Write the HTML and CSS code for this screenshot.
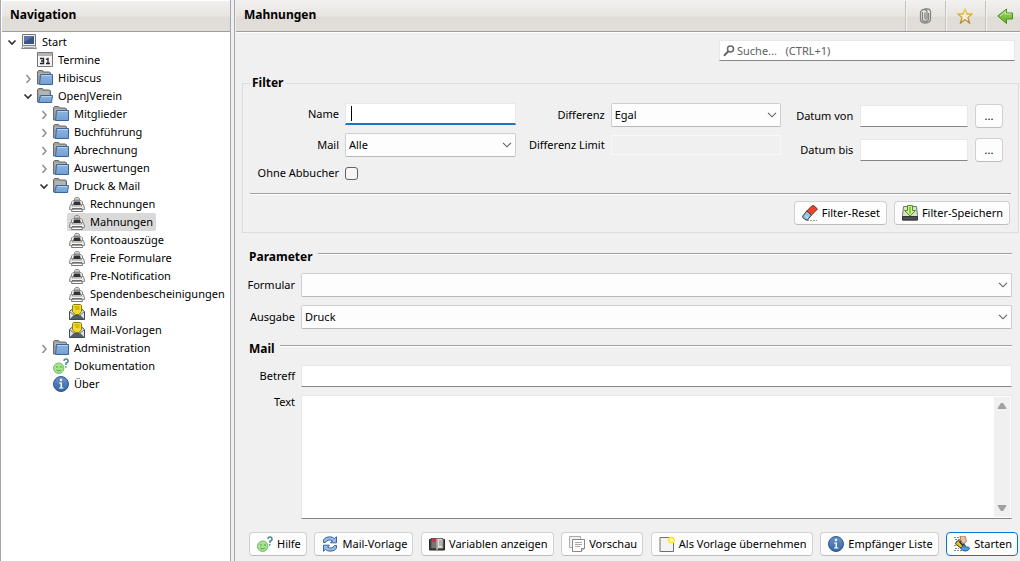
FILE: index.html
```html
<!DOCTYPE html>
<html lang="de">
<head>
<meta charset="utf-8">
<title>Mahnungen</title>
<link rel="stylesheet" href="styles.css">
</head>
<body>
<svg class="sprite" aria-hidden="true">
  <defs>
    <linearGradient id="g-folder" x1="0" y1="0" x2="0" y2="1"><stop offset="0" stop-color="#8fb4dd"/><stop offset="1" stop-color="#729fcf"/></linearGradient>
    <linearGradient id="g-info" x1="0" y1="0" x2="0" y2="1"><stop offset="0" stop-color="#6b93c8"/><stop offset="1" stop-color="#3465a4"/></linearGradient>
    <linearGradient id="g-star" x1="0" y1="0" x2="0" y2="1"><stop offset="0" stop-color="#f0d040"/><stop offset="1" stop-color="#b58a28"/></linearGradient>
    <linearGradient id="g-arrow" x1="0" y1="0" x2="0" y2="1"><stop offset="0" stop-color="#a5d86a"/><stop offset="1" stop-color="#5fae25"/></linearGradient>
  </defs>
  <symbol id="open" viewBox="0 0 10 10"><path d="M1.500 3.500 5 7l3.500-3.500" fill="none" stroke="#333" stroke-width="1.700"/></symbol>
  <symbol id="closed" viewBox="0 0 10 10"><path d="M3.500 2 7 6 3.500 10" fill="none" stroke="#8f8f8f" stroke-width="1.500"/></symbol>
  <symbol id="computer" viewBox="0 0 16 16"><path d="M1.500.5h13v11h-13z" fill="#eeeeec" stroke="#777"/><path d="M3 2h10v8H3z" fill="#3b5488"/><path d="M3 2h10L3 8z" fill="#5b74a8"/><path d="M2 11.500h12l1.500 3H.5z" fill="#e4e4e0" stroke="#888"/><path d="M3 13.500h10" stroke="#aaa"/></symbol>
  <symbol id="calendar" viewBox="0 0 16 16"><path d="M.5.5h15v14H.5z" fill="#f4f4f2" stroke="#777"/><path d="M1 1h14v3H1z" fill="#b4b4b0"/><path d="M3 6.500h3.500v5H3M4 9h2.500M9 7.500l2-1v5M9 11.500h4" fill="none" stroke="#222" stroke-width="1.300"/></symbol>
  <symbol id="folder" viewBox="0 0 16 16"><path d="M.5 14V1.500L1.500.5h4l1 1.500h6l1 1V13z" fill="#a0a09c" stroke="#6a6a68"/><path d="M2 4h10" stroke="#c8c8c4"/><path d="M3.500 4.500h12v10h-13z" fill="url(#g-folder)" stroke="#3465a4"/><path d="M4.500 5.500h10" stroke="#b9d2ee"/></symbol>
  <symbol id="folder-open" viewBox="0 0 16 16"><path d="M.5 14V1.500L1.500.5h4l1 1.500h6l1 1V13z" fill="#a0a09c" stroke="#6a6a68"/><path d="M2 4h10M2 6h10" stroke="#c8c8c4"/><path d="M3.500 7.500h12l-1 7H1.500z" fill="url(#g-folder)" stroke="#3465a4"/><path d="M4.500 8.500h10" stroke="#b9d2ee"/></symbol>
  <symbol id="printer" viewBox="0 0 16 16"><path d="M5.500 4V2.500l1-1h3l1 1V4z" fill="#d0d0cc" stroke="#92928e"/><path d="M2.500 10V6l1.500-1.500h8L13.500 6v4z" fill="#f2f2ef" stroke="#8a8a86"/><path d="M5 5h6l.8 4H4.200z" fill="#2e3436"/><path d="M5 5.500h6" stroke="#888a85"/><path d="M1.500 8.500h2v2h9v-2h2l1 3.500v1.500H.5V12z" fill="#e6e6e2" stroke="#8a8a86"/><path d="M3 11h10" stroke="#fff"/><path d="M3 13h10l.5 2.500h-11z" fill="#fff" stroke="#777975"/><path d="M3 12.800h10" stroke="#555"/></symbol>
  <symbol id="mail" viewBox="0 0 16 16"><path d="M.5 7.500 4 4.500h8l3.500 3v8H.5z" fill="#dfe4e4" stroke="#3f4b50"/><path d="M1 15.500 5.500 11h5l4.500 4.500z" fill="#4f6068" stroke="#3f4b50"/><path d="M1 8l5 4M15 8l-5 4" stroke="#6b787c"/><path d="M3.500 7.500v-6l1-1h7l1 1v6L10 10.500H6z" fill="#f5dc24" stroke="#8a7a14"/><path d="M5.500 3h5M6.500 5h4" stroke="#a99516"/></symbol>
  <symbol id="help" viewBox="0 0 16 16"><circle cx="5.700" cy="10.200" r="5.200" fill="#a4e58c" stroke="#75b667"/><path d="M3 9h2M7 9h2M3.500 12q2.200 1.800 4.500 0" fill="none" stroke="#579b4c"/><path d="M11 3Q11 1 13 1T15 3 13 5V7" fill="none" stroke="#438f87" stroke-width="1.500"/><circle cx="12.800" cy="8.800" r=".9" fill="#438f87"/></symbol>
  <symbol id="info" viewBox="0 0 16 16"><circle cx="8" cy="8" r="7.500" fill="url(#g-info)" stroke="#2c5693"/><circle cx="8" cy="4" r="1.200" fill="#fff"/><path d="M6 6.500h3v5h1.500v1H6v-1h1.500v-4H6z" fill="#fff"/></symbol>
  <symbol id="clip" viewBox="0 0 16 16"><g fill="none" stroke="#858883" stroke-width="1.300"><path d="M5.500 4v7.500q0 2 2 2h1q3 0 3-3V5"/><path d="M8 4.500v5q0 1.500 1 1.500t1-1.500V4q0-2.500-2.500-2.500-4 0-4 3.500v6q0 4 4 4h1q5 0 5-4.500V4q0-3-3-3H7"/></g></symbol>
  <symbol id="star" viewBox="0 0 16 16"><path d="m8 1 2 5h5l-4 3.400L12.500 15 8 11.600 3.500 15 5 9.400 1 6h5z" fill="#f2eee2" stroke="url(#g-star)" stroke-width="1.300"/></symbol>
  <symbol id="back" viewBox="0 0 16 16"><path d="M.7 8 9.500 1v4h6v6h-6v4.500z" fill="url(#g-arrow)" stroke="#4b8f20"/><path d="M3 8l5.500-4.300V6h6" fill="none" stroke="#c5e8a0"/></symbol>
  <symbol id="search" viewBox="0 0 12 12"><circle cx="7.500" cy="4" r="3" fill="none" stroke="#666" stroke-width="1.500"/><path d="M5.500 6 1 10.800" stroke="#666" stroke-width="2"/></symbol>
  <symbol id="eraser" viewBox="0 0 16 16"><path d="M5 15.500h10" stroke="#999" stroke-dasharray="2 1"/><path d="m.8 11 4-5L9.500 10l-4 5H4L.8 12.500z" fill="#8dc7ea" stroke="#333"/><path d="M4.800 6 10 .8h2L15.500 4 9.500 10z" fill="#e8442e" stroke="#7a2a20"/><path d="m3 10.500 3 2.500" stroke="#c9e8f8"/></symbol>
  <symbol id="save" viewBox="0 0 16 16"><path d="M1.500 1.500h13l1 9v4.500H.5v-4.500z" fill="#dcdcd8" stroke="#777"/><path d="M.5 11.500h15v3.500H.5z" fill="#4c5254" stroke="#333"/><path d="M5.500.5h5v5h3L8 11 2.500 5.500h3z" fill="#c8f09a" stroke="#4e9a06"/><path d="M8 2v6.500" stroke="#83d13a" stroke-width="2"/></symbol>
  <symbol id="refresh" viewBox="0 0 16 16"><path d="M1.500 6.500V4Q3 .8 7.500.8q3 0 5 1.700l2-1.700v6H8.500l2-2Q6 2.500 3.500 6.500z" fill="#9bbce2" stroke="#3465a4"/><path d="M14.500 9.500V12q-1.500 3.200-6 3.200-3 0-5-1.700l-2 1.700v-6h6l-2 2q4.500 2.300 7-1.700z" fill="#9bbce2" stroke="#3465a4"/></symbol>
  <symbol id="book" viewBox="0 0 16 16"><path d="M.5 3.500h15v10.500H.5z" fill="#463b36" stroke="#2e2826"/><path d="M2 2.500h5.500v10H2z" fill="#777" stroke="#444"/><path d="M8.500 2.500H14v10H8.500z" fill="#dcdcd8" stroke="#666"/><path d="M3.500 2h3v5L5 5.500 3.500 7z" fill="#d52a3a"/><path d="M10 5h3M10 7h3M10 9h3" stroke="#888"/><path d="M8 3v11" stroke="#f4f4f4"/></symbol>
  <symbol id="pages" viewBox="0 0 16 16"><path d="M.5.5h11v11H.5z" fill="#f2f2f0" stroke="#aaa"/><path d="M3.500 3.500h12v9l-3 3h-9z" fill="#fff" stroke="#888"/><path d="M6 6.500h7M6 8.500h7M6 10.500h5" stroke="#aaa"/><path d="M15.500 12.500h-3v3" fill="#ddd" stroke="#888"/></symbol>
  <symbol id="new" viewBox="0 0 16 16"><path d="M1 1.500h13.500v14H1z" fill="#f3f3f3" stroke="#6f6f6f"/><circle cx="12.500" cy="4" r="3.600" fill="#f9ec3c"/><circle cx="12.500" cy="4" r="1.600" fill="#fffbd0"/></symbol>
  <symbol id="run" viewBox="0 0 16 16"><path d="M0 1.500h8M1 3.500h5M0 9.500h3M1 12.500h4M0 14.500h8" stroke="#888" stroke-dasharray="2 1"/><path d="M6 0h5l1.500 5L10 8 7 5z" fill="#edc09c" stroke="#8a5f44" stroke-width=".7"/><path d="M1.500 8Q2 4.500 5 4.500L6 7l3 3-2 2-3-2z" fill="#e9c51c" stroke="#333"/><path d="M6 4.500 7.500 8 10 8.500l1.500 2" fill="none" stroke="#333" stroke-width="1.300"/><path d="M6.500 12 10 9.500l2 1.500h2.500l1 1.500q-1 2.500-4 2.500-3 .5-5-3z" fill="#4aa0dc" stroke="#245c8e"/></symbol>
  <symbol id="up" viewBox="0 0 10 8"><path d="M1 6.500 4 1.500h2l3 5z" fill="#a0a0a0" stroke="#a0a0a0" stroke-linejoin="round"/></symbol>
  <symbol id="down" viewBox="0 0 10 8"><path d="M1 1.500h8l-3 5H4z" fill="#a0a0a0" stroke="#a0a0a0" stroke-linejoin="round"/></symbol>
</svg>

<div class="app">
  <nav class="nav" aria-label="Navigation">
    <header class="bar"><h2 class="bar-title">Navigation</h2></header>
    <ul class="tree">
      <li class="node"><svg class="twist"><use href="#open"/></svg><svg class="icon"><use href="#computer"/></svg><span class="node-label">Start</span></li>
      <li class="node level-1"><span class="twist"></span><svg class="icon"><use href="#calendar"/></svg><span class="node-label">Termine</span></li>
      <li class="node level-1"><svg class="twist"><use href="#closed"/></svg><svg class="icon"><use href="#folder"/></svg><span class="node-label">Hibiscus</span></li>
      <li class="node level-1"><svg class="twist"><use href="#open"/></svg><svg class="icon"><use href="#folder-open"/></svg><span class="node-label">OpenJVerein</span></li>
      <li class="node level-2"><svg class="twist"><use href="#closed"/></svg><svg class="icon"><use href="#folder"/></svg><span class="node-label">Mitglieder</span></li>
      <li class="node level-2"><svg class="twist"><use href="#closed"/></svg><svg class="icon"><use href="#folder"/></svg><span class="node-label">Buchführung</span></li>
      <li class="node level-2"><svg class="twist"><use href="#closed"/></svg><svg class="icon"><use href="#folder"/></svg><span class="node-label">Abrechnung</span></li>
      <li class="node level-2"><svg class="twist"><use href="#closed"/></svg><svg class="icon"><use href="#folder"/></svg><span class="node-label">Auswertungen</span></li>
      <li class="node level-2"><svg class="twist"><use href="#open"/></svg><svg class="icon"><use href="#folder-open"/></svg><span class="node-label">Druck &amp; Mail</span></li>
      <li class="node level-3"><svg class="icon"><use href="#printer"/></svg><span class="node-label">Rechnungen</span></li>
      <li class="node level-3 selected"><svg class="icon"><use href="#printer"/></svg><span class="node-label">Mahnungen</span></li>
      <li class="node level-3"><svg class="icon"><use href="#printer"/></svg><span class="node-label">Kontoauszüge</span></li>
      <li class="node level-3"><svg class="icon"><use href="#printer"/></svg><span class="node-label">Freie Formulare</span></li>
      <li class="node level-3"><svg class="icon"><use href="#printer"/></svg><span class="node-label">Pre-Notification</span></li>
      <li class="node level-3"><svg class="icon"><use href="#printer"/></svg><span class="node-label">Spendenbescheinigungen</span></li>
      <li class="node level-3"><svg class="icon"><use href="#mail"/></svg><span class="node-label">Mails</span></li>
      <li class="node level-3"><svg class="icon"><use href="#mail"/></svg><span class="node-label">Mail-Vorlagen</span></li>
      <li class="node level-2"><svg class="twist"><use href="#closed"/></svg><svg class="icon"><use href="#folder"/></svg><span class="node-label">Administration</span></li>
      <li class="node level-2"><span class="twist"></span><svg class="icon"><use href="#help"/></svg><span class="node-label">Dokumentation</span></li>
      <li class="node level-2"><span class="twist"></span><svg class="icon"><use href="#info"/></svg><span class="node-label">Über</span></li>
    </ul>
  </nav>

  <main class="main">
    <header class="bar">
      <h1 class="bar-title">Mahnungen</h1>
      <button class="tool" type="button" aria-label="Dokumente"><svg class="icon"><use href="#clip"/></svg></button>
      <button class="tool" type="button" aria-label="Favorit"><svg class="icon"><use href="#star"/></svg></button>
      <button class="tool" type="button" aria-label="Zurück"><svg class="icon"><use href="#back"/></svg></button>
    </header>

    <form class="content">
      <div class="search-row">
        <div class="search box">
          <svg class="search-icon"><use href="#search"/></svg>
          <input class="search-input" type="text" aria-label="Suche" placeholder="Suche...   (CTRL+1)">
        </div>
      </div>

      <fieldset class="filter">
        <legend class="heading">Filter</legend>
        <div class="filter-grid">
          <div class="fields fields-person">
            <label for="name">Name</label>
            <div class="focus-wrap"><input class="box focused" id="name" type="text"><span class="caret"></span></div>
            <label for="mail">Mail</label>
            <select class="combo" id="mail"><option>Alle</option></select>
            <label for="ohne">Ohne Abbucher</label>
            <input class="check" id="ohne" type="checkbox">
          </div>
          <div class="fields fields-diff">
            <label for="diff">Differenz</label>
            <select class="combo" id="diff"><option>Egal</option></select>
            <label for="limit">Differenz Limit</label>
            <input class="box" id="limit" type="text" disabled>
          </div>
          <div class="fields fields-date">
            <label for="von">Datum von</label>
            <input class="box" id="von" type="text">
            <button class="button pick" type="button" aria-label="Datum von wählen">...</button>
            <label for="bis">Datum bis</label>
            <input class="box" id="bis" type="text">
            <button class="button pick" type="button" aria-label="Datum bis wählen">...</button>
          </div>
        </div>
        <hr class="rule">
        <div class="filter-actions">
          <button class="button" type="button"><svg class="icon"><use href="#eraser"/></svg>Filter-Reset</button>
          <button class="button" type="button"><svg class="icon"><use href="#save"/></svg>Filter-Speichern</button>
        </div>
      </fieldset>

      <div class="section"><h2 class="heading">Parameter</h2><hr class="rule"></div>
      <div class="rows">
        <label for="formular">Formular</label>
        <select class="combo" id="formular"><option></option></select>
        <label for="ausgabe">Ausgabe</label>
        <select class="combo" id="ausgabe"><option>Druck</option></select>
      </div>

      <div class="section"><h2 class="heading">Mail</h2><hr class="rule"></div>
      <div class="rows rows-mail">
        <label for="betreff">Betreff</label>
        <input class="box" id="betreff" type="text">
        <label class="label-top" for="text">Text</label>
        <div class="memo box">
          <textarea class="memo-text" id="text"></textarea>
          <div class="scroll"><svg class="scroll-arrow"><use href="#up"/></svg><svg class="scroll-arrow"><use href="#down"/></svg></div>
        </div>
      </div>

      <div class="actions">
        <button class="button" type="button"><svg class="icon"><use href="#help"/></svg>Hilfe</button>
        <button class="button" type="button"><svg class="icon"><use href="#refresh"/></svg>Mail-Vorlage</button>
        <button class="button" type="button"><svg class="icon"><use href="#book"/></svg>Variablen anzeigen</button>
        <button class="button" type="button"><svg class="icon"><use href="#pages"/></svg>Vorschau</button>
        <button class="button" type="button"><svg class="icon"><use href="#new"/></svg>Als Vorlage übernehmen</button>
        <button class="button" type="button"><svg class="icon"><use href="#info"/></svg>Empfänger Liste</button>
        <button class="button primary" type="button"><svg class="icon"><use href="#run"/></svg>Starten</button>
      </div>
    </form>
  </main>
</div>
</body>
</html>
```
FILE: styles.css
```css
* { box-sizing: border-box; }

body {
  margin: 0;
  background: #f0f0f0;
  color: #000;
  font: 11px/18px "Noto Sans", "Open Sans", sans-serif;
}

input, select, textarea, button { font: inherit; color: inherit; margin: 0; }
h1, h2 { margin: 0; }
label { white-space: nowrap; }

.sprite { position: absolute; width: 0; height: 0; }
.icon { width: 16px; height: 16px; flex: none; }

.app {
  display: grid;
  grid-template-columns: 231px minmax(0, 1fr);
  gap: 3px;
  min-height: 100vh;
}

.nav {
  background: #fff;
  border-left: 1px solid #a5a5ad;
  border-right: 1px solid #a5a5ad;
  padding: 1px 0 0 1px;
}

.main {
  display: flex;
  flex-direction: column;
  border-left: 1px solid #a5a5ad;
  padding: 1px 0 0 1px;
}

.bar {
  display: flex;
  height: 31px;
  flex: none;
  border-bottom: 1px solid #9f9d9a;
  background: linear-gradient(#f1f0ee, #e8e5e1 50%, #e0ddd8 55%, #e1ded9);
}

.bar-title { flex: 1; padding-left: 8px; font-size: 12px; line-height: 28px; }

.tool {
  display: flex;
  align-items: center;
  justify-content: flex-end;
  width: 40px;
  padding: 0 12px 0 0;
  border: 0;
  border-left: 1px solid #c4c2be;
  background: none;
  box-shadow: inset 1px 0 #f4f3f1;
}

.tool:last-child { width: 35px; padding-right: 7px; }

.tree { list-style: none; margin: 0; padding: 1px 0 0 5px; }
.node { display: flex; align-items: center; width: max-content; height: 18px; }
.twist { width: 10px; height: 10px; margin-right: 4px; flex: none; }
.node-label { padding: 0 3px 0 5px; }
.level-1 { margin-left: 16px; }
.level-2 { margin-left: 32px; }
.level-3 { margin-left: 60px; padding-left: 2px; }
.selected { background: #d9d9d9; border-radius: 2px; }

.content {
  display: flex;
  flex: 1;
  flex-direction: column;
  padding: 7px 1px 5px 6px;
  border-top: 1px solid #fff;
}

.box {
  width: 100%;
  min-width: 0;
  height: 22px;
  padding: 0 5px;
  border: 1px solid #e8e8e8;
  border-bottom-color: #868686;
  background: #fff;
  outline: 0;
}

.box:disabled { height: 20px; border-color: #f8f8f8; background: #f0f0f0; }

.search-row { display: flex; justify-content: flex-end; padding-right: 4px; }
.search { display: flex; align-items: center; width: 296px; height: 21px; padding: 0 3px; }
.search-icon { width: 12px; height: 12px; flex: none; }
.search-input { flex: 1; min-width: 0; padding: 0 2px; border: 0; background: none; outline: 0; }
.search-input::placeholder { color: #606060; opacity: 1; white-space: pre; }

.heading { font-size: 12px; line-height: 18px; font-weight: bold; }

.filter { margin: 13px 0 0; padding: 11px 7px 7px; border: 1px solid #dcdcdc; min-width: 0; }
.filter .heading { padding: 0 2px; }

.filter-grid {
  display: grid;
  grid-template-columns: 261fr 254fr 210fr;
  gap: 12px;
  padding: 0 8px 0 5px;
}

.fields { display: grid; align-items: center; align-content: start; gap: 8px 6px; line-height: 16px; text-align: right; }
.fields-person { grid-template-columns: 84px minmax(0, 1fr); }
.fields-diff { grid-template-columns: 77px minmax(0, 1fr); }
.fields-date { grid-template-columns: 60px minmax(0, 1fr) 28px; padding-top: 1px; gap: 10px 7px; }

.focus-wrap { position: relative; display: flex; }
.focused { border-bottom: 2px solid #1a73c4; }
.caret { position: absolute; left: 6px; top: 3px; width: 1px; height: 15px; background: #000; }

.combo {
  appearance: none;
  width: 100%;
  min-width: 0;
  height: 24px;
  padding: 0 20px 0 3px;
  border: 1px solid #cfcfcf;
  border-bottom-color: #b8b8b8;
  border-radius: 2px;
  background: #fdfdfd url("data:image/svg+xml,%3Csvg xmlns='http://www.w3.org/2000/svg' width='10' height='6'%3E%3Cpath d='M1 .8 5 4.800 9 .8' fill='none' stroke='%23606060' stroke-width='1.100'/%3E%3C/svg%3E") no-repeat right 3px center;
  outline: 0;
}

.check {
  appearance: none;
  width: 13px;
  height: 13px;
  border: 1px solid #626262;
  border-radius: 3px;
  background: #f6f6f6;
}

.rule { flex: 1; height: 2px; margin: 0; border: 0; border-top: 1px solid #a0a0a0; border-bottom: 1px solid #fff; }
.filter .rule { margin-top: 12px; }

.button {
  display: flex;
  align-items: center;
  justify-content: center;
  gap: 4px;
  height: 24px;
  padding: 0 5px 0 7px;
  border: 1px solid #d0d0d0;
  border-bottom-color: #bcbcbc;
  border-radius: 4px;
  background: #fdfdfd;
  white-space: nowrap;
}

.pick { padding: 0; }
.primary { border-color: #0078d4; }

.filter-actions { display: flex; justify-content: flex-end; gap: 7px; padding: 6px 1px 0 0; }
.filter-actions .button { padding-right: 6px; }

.section { display: flex; align-items: center; gap: 5px; margin: 15px 7px 0; }
.section .rule { margin-bottom: 6px; }

.rows {
  display: grid;
  grid-template-columns: 53px minmax(0, 1fr);
  gap: 8px 6px;
  align-items: center;
  padding: 7px 7px 0 0;
  text-align: right;
}

.rows + .section { margin-top: 11px; }
.rows-mail { flex: 1; grid-template-rows: auto minmax(60px, 1fr); }
.label-top { align-self: start; line-height: 14px; }

.memo { display: flex; height: 100%; padding: 1px 1px 1px 0; }
.memo-text { flex: 1; min-width: 0; padding: 2px 4px; border: 0; resize: none; outline: 0; }

.scroll {
  display: flex;
  flex-direction: column;
  justify-content: space-between;
  align-items: center;
  width: 16px;
  padding: 5px 0;
  background: #f0f0f0;
}

.scroll-arrow { width: 10px; height: 8px; }

.actions { display: flex; justify-content: space-between; gap: 7px; padding: 13px 1px 0 7px; }
```
